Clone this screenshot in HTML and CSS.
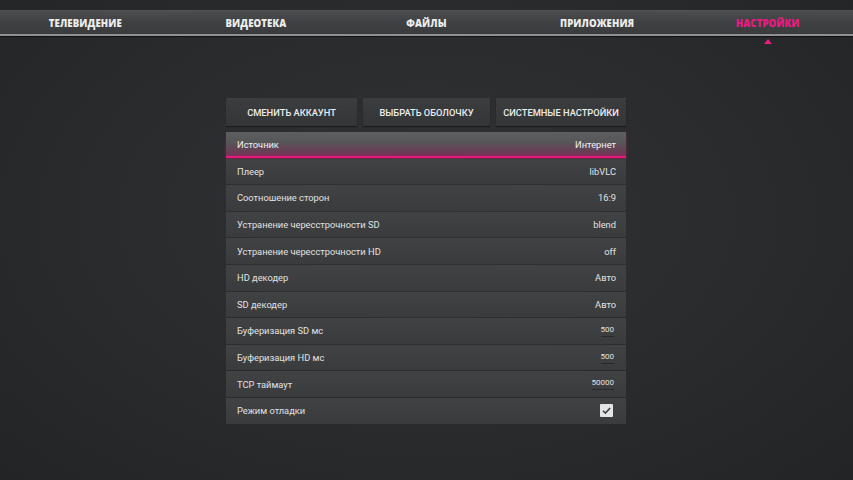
FILE: index.html
```html
<!DOCTYPE html>
<html lang="ru">
<head>
<meta charset="utf-8">
<link rel="stylesheet" href="styles.css">
</head>
<body>
<nav class="topbar">
  <div class="tab">ТЕЛЕВИДЕНИЕ</div>
  <div class="tab">ВИДЕОТЕКА</div>
  <div class="tab">ФАЙЛЫ</div>
  <div class="tab">ПРИЛОЖЕНИЯ</div>
  <div class="tab active">НАСТРОЙКИ</div>
</nav>
<div class="marker-row"><span class="marker"></span></div>
<main class="panel">
  <div class="buttons">
    <div class="btn">СМЕНИТЬ АККАУНТ</div>
    <div class="btn">ВЫБРАТЬ ОБОЛОЧКУ</div>
    <div class="btn">СИСТЕМНЫЕ НАСТРОЙКИ</div>
  </div>
  <div class="list">
    <div class="row focused"><span>Источник</span><span>Интернет</span></div>
    <div class="row"><span>Плеер</span><span>libVLC</span></div>
    <div class="row"><span>Соотношение сторон</span><span>16:9</span></div>
    <div class="row"><span>Устранение чересстрочности SD</span><span>blend</span></div>
    <div class="row"><span>Устранение чересстрочности HD</span><span>off</span></div>
    <div class="row"><span>HD декодер</span><span>Авто</span></div>
    <div class="row"><span>SD декодер</span><span>Авто</span></div>
    <div class="row"><span>Буферизация SD мс</span><span class="field">500</span></div>
    <div class="row"><span>Буферизация HD мс</span><span class="field">500</span></div>
    <div class="row"><span>TCP таймаут</span><span class="field">50000</span></div>
    <div class="row"><span>Режим отладки</span><span class="check"><svg viewBox="0 0 14 14" width="13" height="13"><path d="M3.2 7.3 L5.8 9.8 L10.9 4.4" fill="none" stroke="#3a3c3e" stroke-width="1.6"/></svg></span></div>
  </div>
</main>
</body>
</html>
```
FILE: styles.css
```css
html, body {
  margin: 0;
  padding: 0;
  height: 100%;
}
body {
  background: radial-gradient(ellipse at 50% 45%, #313234 0%, #2a2b2d 55%, #232426 100%);
  font-family: Roboto, "Open Sans", sans-serif;
  color: #e9e9e9;
  overflow: hidden;
}
.topbar {
  margin-top: 10px;
  height: 23px;
  display: grid;
  grid-template-columns: repeat(5, 1fr);
  align-items: center;
  background: linear-gradient(#4b4d4f 0%, #3e4042 50%, #393b3d 100%);
  border-top: 1px solid #505254;
  border-bottom: 2px solid #8e9092;
  box-shadow: 0 1px 1px rgba(0,0,0,0.5);
}
.tab {
  text-align: center;
  font-family: "Open Sans", sans-serif;
  font-weight: 800;
  font-size: 9.6px;
  letter-spacing: 0.1px;
  color: #ececec;
  padding-top: 1px;
}
.tab.active {
  color: #ec1a82;
}
.marker-row {
  display: grid;
  grid-template-columns: repeat(5, 1fr);
  height: 8px;
}
.marker {
  grid-column: 5;
  justify-self: center;
  width: 0;
  height: 0;
  margin-top: 3px;
  border-left: 4px solid transparent;
  border-right: 4px solid transparent;
  border-bottom: 5px solid #ec1a82;
}
.panel {
  width: 400px;
  margin: 54px auto 0;
  position: relative;
  left: -0.5px;
}
.buttons {
  display: grid;
  grid-template-columns: 131px 127px 130px;
  gap: 6px;
  height: 28px;
}
.btn {
  display: flex;
  align-items: center;
  justify-content: center;
  background: linear-gradient(#3b3d3f, #333537);
  font-size: 9.3px;
  font-weight: 500;
  color: #ececec;
  box-shadow: 0 1px 1px rgba(0,0,0,0.4);
}
.list {
  margin-top: 6px;
  display: flex;
  flex-direction: column;
  gap: 1px;
}
.row {
  height: 25.6px;
  display: flex;
  align-items: center;
  justify-content: space-between;
  padding: 0 10px 0 11px;
  background: linear-gradient(#404244, #393b3d);
  font-size: 9.3px;
  color: #e2e2e2;
}
.row.focused {
  background: linear-gradient(#5d5f61 0%, #565658 40%, #6b3a55 80%, #8c2a5c 100%);
  box-shadow: inset 0 -2px 0 #e8177e, 0 2px 3px rgba(232,23,126,0.35);
  color: #f2f2f2;
}
.field {
  font-size: 8px;
  padding-bottom: 2px;
  border-bottom: 1px solid #26282a;
  margin-right: 2px;
}
.check {
  width: 13px;
  height: 13px;
  background: #e4e4e4;
  border-radius: 1px;
  margin-right: 3px;
  display: flex;
}
```
